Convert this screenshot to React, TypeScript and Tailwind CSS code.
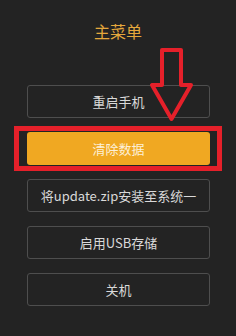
const items = ["重启手机", "清除数据", "将update.zip安装至系统一", "启用USB存储", "关机"];

function MenuButton({ label, active }: { label: string; active: boolean }) {
  if (active) {
    return (
      <div className="relative">
        <div className="absolute -left-[13px] -right-[12px] -top-[6px] -bottom-[6px] border-[5px] border-[#e5202a]" />
        <div className="relative flex h-[33px] items-center justify-center rounded-[3px] bg-[#f0a822] text-[13px] text-[#fdf0d8]">
          {label}
        </div>
      </div>
    );
  }
  return (
    <div className="flex h-[33px] items-center justify-center rounded-[3px] border border-[#4e4e4e] text-[13px] text-[#d9d9d9]">
      {label}
    </div>
  );
}

export default function App() {
  return (
    <div
      className="relative h-[336px] w-[236px] overflow-hidden bg-[#232323]"
      style={{ fontFamily: '"Noto Sans CJK SC", "Noto Sans", sans-serif' }}
    >
      <div className="pt-[21px] text-center text-[16px] leading-[20px] text-[#e5a83c]">主菜单</div>
      <div className="ml-[27px] mt-[44px] flex w-[183px] flex-col gap-[14px]">
        {items.map((item, i) => (
          <MenuButton key={item} label={item} active={i === 1} />
        ))}
      </div>
      <svg className="absolute left-0 top-0" width="236" height="336" viewBox="0 0 236 336">
        <polygon
          points="162,50 181,50 181,85 191,85 171.5,119 152,85 162,85"
          fill="none"
          stroke="#e5202a"
          strokeWidth="4"
          strokeLinejoin="round"
        />
      </svg>
    </div>
  );
}
